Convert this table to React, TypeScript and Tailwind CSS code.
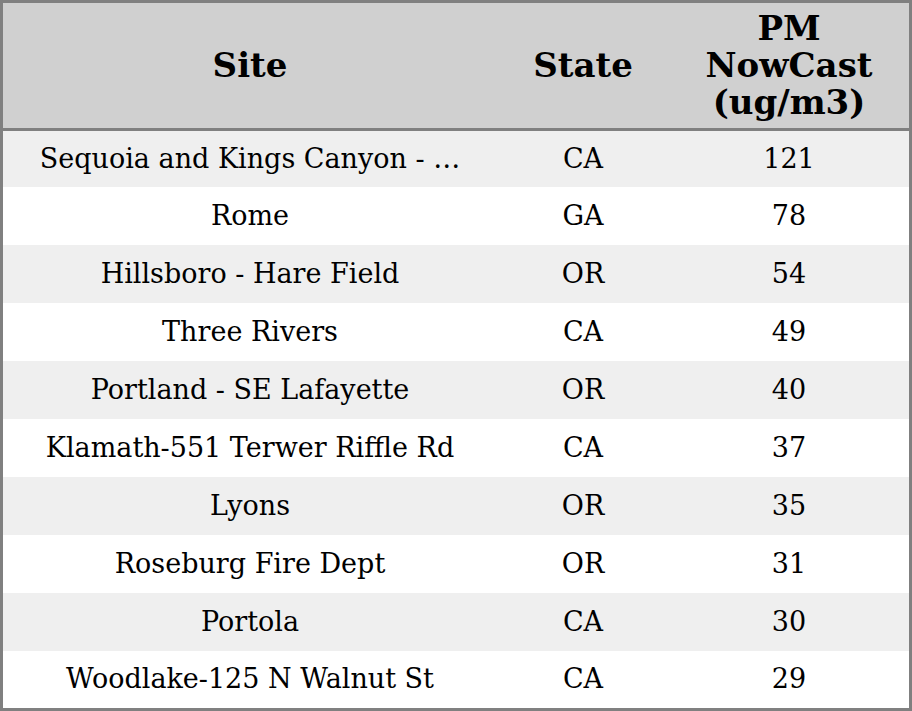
import * as React from "react"

const rows: [string, string, number][] = [
    ["Sequoia and Kings Canyon - …", "CA", 121],
    ["Rome", "GA", 78],
    ["Hillsboro - Hare Field", "OR", 54],
    ["Three Rivers", "CA", 49],
    ["Portland - SE Lafayette", "OR", 40],
    ["Klamath-551 Terwer Riffle Rd", "CA", 37],
    ["Lyons", "OR", 35],
    ["Roseburg Fire Dept", "OR", 31],
    ["Portola", "CA", 30],
    ["Woodlake-125 N Walnut St", "CA", 29],
]

export default function App() {
    return (
        <div className="w-[912px] h-[711px] bg-white font-['DejaVu_Serif',serif] text-black">
            <div className="border-[3px] border-[#808080] flex flex-col">
                {/* HEADER */}
                <div className="grid grid-cols-[494px_172px_240px] h-[128px] bg-[#d0d0d0] border-b-[3px] border-[#808080] text-[34px] font-bold leading-[37px] text-center">
                    <div className="flex items-center justify-center">Site</div>
                    <div className="flex items-center justify-center">State</div>
                    <div className="flex items-center justify-center">PM<br />NowCast<br />(ug/m3)</div>
                </div>

                {/* BODY */}
                {rows.map(([site, state, pm], i) => (
                    <div
                        key={site}
                        className={
                            "grid grid-cols-[494px_172px_240px] items-center text-center text-[27px] " +
                            (i % 2 === 0 ? "bg-[#efefef] " : "bg-white ") +
                            (i === 0 ? "h-[56px]" : i === rows.length - 1 ? "h-[57px]" : "h-[58px]")
                        }
                    >
                        <div className="whitespace-nowrap">{site}</div>
                        <div>{state}</div>
                        <div>{pm}</div>
                    </div>
                ))}
            </div>
        </div>
    )
}
